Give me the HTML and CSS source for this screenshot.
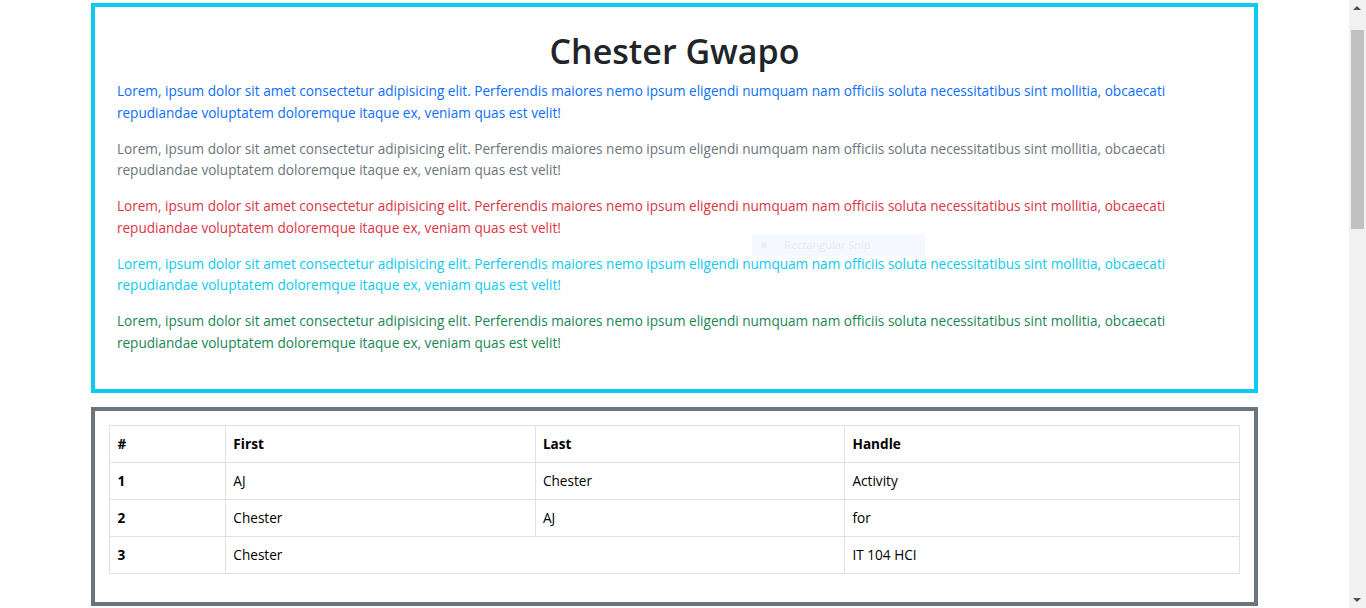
FILE: index.html
```html
<!DOCTYPE html>
<html lang="en">
<head>
<meta charset="utf-8">
<title>Chester Gwapo</title>
<link rel="stylesheet" href="styles.css">
</head>
<body>
<div class="container">
  <section class="box box-info">
    <h1 class="title">Chester Gwapo</h1>
    <p class="text-primary">Lorem, ipsum dolor sit amet consectetur adipisicing elit. Perferendis maiores nemo ipsum eligendi numquam nam officiis soluta necessitatibus sint mollitia, obcaecati repudiandae voluptatem doloremque itaque ex, veniam quas est velit!</p>
    <p class="text-secondary">Lorem, ipsum dolor sit amet consectetur adipisicing elit. Perferendis maiores nemo ipsum eligendi numquam nam officiis soluta necessitatibus sint mollitia, obcaecati repudiandae voluptatem doloremque itaque ex, veniam quas est velit!</p>
    <p class="text-danger">Lorem, ipsum dolor sit amet consectetur adipisicing elit. Perferendis maiores nemo ipsum eligendi numquam nam officiis soluta necessitatibus sint mollitia, obcaecati repudiandae voluptatem doloremque itaque ex, veniam quas est velit!</p>
    <p class="text-info">Lorem, ipsum dolor sit amet consectetur adipisicing elit. Perferendis maiores nemo ipsum eligendi numquam nam officiis soluta necessitatibus sint mollitia, obcaecati repudiandae voluptatem doloremque itaque ex, veniam quas est velit!</p>
    <p class="text-success">Lorem, ipsum dolor sit amet consectetur adipisicing elit. Perferendis maiores nemo ipsum eligendi numquam nam officiis soluta necessitatibus sint mollitia, obcaecati repudiandae voluptatem doloremque itaque ex, veniam quas est velit!</p>
    <div class="snip"><span class="snip-dot"></span>Rectangular Snip</div>
  </section>
  <section class="box box-secondary">
    <table class="table">
      <colgroup>
        <col class="c-num"><col class="c-first"><col class="c-last"><col class="c-handle">
      </colgroup>
      <thead>
        <tr><th>#</th><th>First</th><th>Last</th><th>Handle</th></tr>
      </thead>
      <tbody>
        <tr><th>1</th><td>AJ</td><td>Chester</td><td>Activity</td></tr>
        <tr><th>2</th><td>Chester</td><td>AJ</td><td>for</td></tr>
        <tr><th>3</th><td colspan="2">Chester</td><td>IT 104 HCI</td></tr>
      </tbody>
    </table>
  </section>
  <div class="more"></div>
</div>
<div class="scrollbar" aria-hidden="true">
  <span class="sb-arrow sb-up"></span>
  <span class="sb-track"><span class="sb-thumb"></span></span>
  <span class="sb-arrow sb-down"></span>
</div>
</body>
</html>
```

FILE: styles.css
```css
* { box-sizing: border-box; }
html, body { margin: 0; padding: 0; }
body {
  font-family: "Open Sans", "Noto Sans", sans-serif;
  font-size: 13.6px;
  line-height: 21.6px;
  color: #212529;
  background: #fff;
  padding-right: 17px;
}
.container {
  max-width: 1188px;
  margin: 0 auto;
  padding: 0 10.8px;
}
.box {
  position: relative;
}
.box-info {
  margin-top: 3px;
  border: 4px solid #0dcaf0;
  padding: 22.6px 21.6px 21px;
}
.box-secondary {
  margin-top: 14px;
  border: 4px solid #6c757d;
  padding: 14px;
}
.title {
  margin: 0 0 7.2px;
  font-size: 34px;
  font-weight: 600;
  line-height: 43.2px;
  text-align: center;
  color: #212529;
}
p { margin: 0 0 14.4px; }
.text-primary { color: #0d6efd; }
.text-secondary { color: #6c757d; }
.text-danger { color: #dc3545; }
.text-info { color: #0dcaf0; }
.text-success { color: #198754; }

.snip {
  position: absolute;
  left: 657px;
  top: 227px;
  width: 173px;
  height: 22px;
  padding-left: 32px;
  background: rgba(225, 238, 255, 0.35);
  color: #e6eaf0;
  font-size: 11px;
  line-height: 22px;
}
.snip-dot {
  position: absolute;
  left: 9px;
  top: 8px;
  width: 6px;
  height: 6px;
  border-radius: 50%;
  background: #e8edf5;
}

.table {
  width: 100%;
  border-collapse: collapse;
  margin-bottom: 14px;
  table-layout: fixed;
}
.c-num { width: 10.26%; }
.c-first { width: 27.41%; }
.c-last { width: 27.41%; }
.c-handle { width: 34.92%; }
.table th, .table td {
  border: 1px solid #dee2e6;
  padding: 7.6px 7.2px 6.8px;
  text-align: left;
  vertical-align: top;
  color: #000;
}
.table th { font-weight: 700; }
.table td { font-weight: 400; }
.more { height: 1150px; }

.scrollbar {
  position: fixed;
  top: 0;
  right: 0;
  width: 17px;
  height: 100vh;
  background: #f1f1f1;
  display: flex;
  flex-direction: column;
}
.sb-arrow {
  height: 17px;
  flex: none;
  position: relative;
}
.sb-arrow::after {
  content: "";
  position: absolute;
  left: 4px;
  border-left: 4px solid transparent;
  border-right: 4px solid transparent;
}
.sb-up::after { top: 6px; border-bottom: 4px solid #505050; }
.sb-down::after { top: 7px; border-top: 4px solid #505050; }
.sb-track {
  flex: 1;
  padding: 13px 2px 0;
}
.sb-thumb {
  display: block;
  height: 199px;
  background: #c1c1c1;
}
```
